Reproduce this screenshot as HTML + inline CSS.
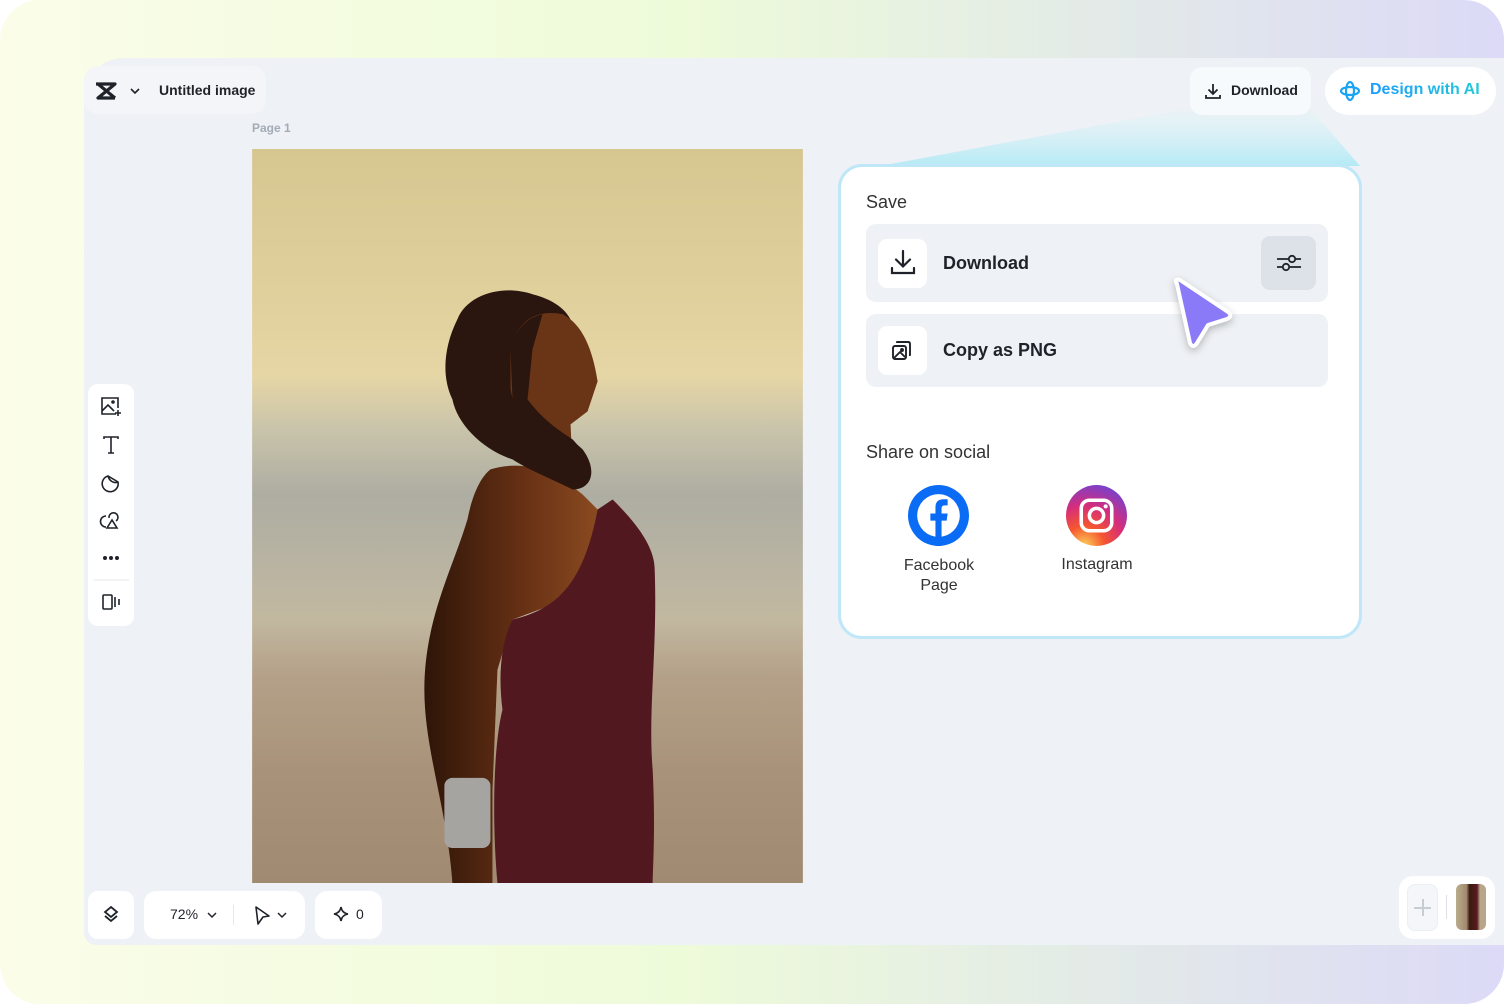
<!DOCTYPE html>
<html><head><meta charset="utf-8"><style>
*{margin:0;padding:0;box-sizing:border-box}
html,body{width:1504px;height:1004px;overflow:hidden;background:#fff;font-family:"Liberation Sans",sans-serif}
.bg{position:absolute;left:0;top:0;width:1504px;height:1004px;border-radius:40px;background:linear-gradient(90deg,#fbfde9 0%,#eefbd9 45%,#e4ece6 70%,#dcdaf7 100%)}
.app{position:absolute;left:84px;top:58px;width:1420px;height:887px;background:#eef1f5;border-radius:40px 0 0 12px}
.abs{position:absolute}
.w{background:#fff}
.t{color:#1f2329}
</style></head><body>
<div class="bg"></div>
<div class="app"></div>

<div class="abs" style="left:84px;top:66px;width:182px;height:48px;background:#f3f5f8;border-radius:14px"></div>
<svg class="abs" style="left:94px;top:82px" width="24" height="18" viewBox="0 0 24 18"><path d="M2 2H21L4 16H21M4 2L21 16" fill="none" stroke="#1f2329" stroke-width="3.2" stroke-linejoin="round"/></svg>
<svg class="abs" style="left:129px;top:86px" width="12" height="10" viewBox="0 0 12 10"><path d="M2 3L6 7L10 3" fill="none" stroke="#1f2329" stroke-width="1.6"/></svg>
<div class="abs t" style="left:159px;top:82px;font-size:14px;font-weight:700">Untitled image</div>
<div class="abs" style="left:252px;top:121px;font-size:12px;color:#a3abb6;font-weight:700">Page 1</div>

<svg class="abs" style="left:0;top:0" width="1504" height="200"><defs><linearGradient id="bm" x1="0" y1="0" x2="0" y2="1"><stop offset="0" stop-color="#e6f5f8" stop-opacity=".4"/><stop offset="1" stop-color="#b4eaf5"/></linearGradient></defs><polygon points="1192,108 1310,108 1360,166 880,166" fill="url(#bm)"/></svg>

<div class="abs" style="left:1190px;top:67px;width:121px;height:48px;background:#f6fafc;border-radius:12px"></div>
<svg class="abs" style="left:1204px;top:82px" width="18" height="18" viewBox="0 0 18 18"><path d="M9 2V12M4.5 7.5L9 12L13.5 7.5M2 13V16H16V13" fill="none" stroke="#1f2329" stroke-width="1.8"/></svg>
<div class="abs t" style="left:1231px;top:82px;font-size:14px;font-weight:700">Download</div>
<div class="abs w" style="left:1325px;top:67px;width:171px;height:48px;border-radius:24px"></div>
<svg class="abs" style="left:1339px;top:80px" width="22" height="22" viewBox="0 0 22 22"><g fill="none" stroke="#1aa4f4" stroke-width="2.2"><ellipse cx="11" cy="11" rx="9" ry="4"/><ellipse cx="11" cy="11" rx="4" ry="9"/></g></svg>
<div class="abs" style="left:1370px;top:81px;font-size:16px;font-weight:700;background:linear-gradient(90deg,#1a9cff,#23c8d8);-webkit-background-clip:text;background-clip:text;color:transparent">Design with AI</div>

<svg class="abs" style="left:252px;top:149px" width="551" height="734" viewBox="0 0 550 733">
<defs>
<linearGradient id="sc" x1="0" y1="0" x2="0" y2="1">
<stop offset="0" stop-color="#d6c690"/><stop offset=".2" stop-color="#e0d09c"/><stop offset=".31" stop-color="#e6d6a6"/>
<stop offset=".38" stop-color="#c9c4aa"/><stop offset=".47" stop-color="#aeada2"/><stop offset=".56" stop-color="#b8b3a2"/><stop offset=".64" stop-color="#c2b8a0"/>
<stop offset=".72" stop-color="#b4a088"/><stop offset=".85" stop-color="#a8927a"/><stop offset="1" stop-color="#a08a72"/></linearGradient>
<linearGradient id="sk" x1="0" y1="0" x2="1" y2="0"><stop offset="0" stop-color="#2e1508"/><stop offset=".6" stop-color="#6a3215"/><stop offset="1" stop-color="#8a4a20"/></linearGradient>
</defs>
<rect width="550" height="733" fill="url(#sc)"/>
<path d="M238,320 C270,310 300,320 330,345 L345,360 L340,440 L260,470 L245,520 L240,640 L240,733 L200,733 C195,660 172,600 172,540 C172,470 200,420 215,370 C220,345 228,328 238,320 Z" fill="url(#sk)"/>
<path d="M205,170 C215,145 250,135 280,145 C300,150 315,160 320,175 L300,180 L282,215 L275,255 C290,275 310,280 330,300 C345,320 340,340 320,340 C300,330 275,320 260,310 C230,300 205,275 200,250 C190,230 190,200 205,170 Z" fill="#2a160e"/>
<path d="M258,200 C265,170 285,160 310,165 C330,175 340,200 345,232 L335,262 L318,275 L320,320 L285,300 C270,285 262,260 258,240 Z" fill="#6a3416"/>
<path d="M258,200 C262,180 275,168 290,165 L280,200 L275,250 C290,270 305,280 320,290 C340,310 338,335 320,335 C300,325 275,315 262,300 Z" fill="#2a160e"/>
<path d="M260,470 C300,460 330,440 345,360 L360,350 C380,370 402,395 402,420 C405,500 395,560 400,620 C403,680 400,720 400,733 L245,733 C240,680 240,600 250,560 C245,520 250,490 260,470 Z" fill="#521820"/>
<rect x="192" y="628" width="46" height="70" rx="8" fill="#a5a4a0"/>
</svg>

<div class="abs w" style="left:88px;top:384px;width:46px;height:242px;border-radius:10px"></div>
<svg class="abs" style="left:88px;top:384px" width="46" height="242" viewBox="0 0 46 242" fill="none" stroke="#1f2329" stroke-width="1.6">
<path d="M28 30H14V14H30V24M14 27L20 21L26 27M27 29H33M30 26V32"/><circle cx="25" cy="18" r="1" fill="#1f2329"/>
<path d="M16 55V53H30V55M23 53V69M20 69H26"/>
<path d="M30 98A8 8 0 1 1 20 92L30 98ZM20 92C21 96 25 100 30 98"/>
<path d="M19 144L24 136L29 144ZM21 134A4.5 4.5 0 1 1 28 137M18 143A4 4 0 0 1 18 132"/>
<circle cx="17" cy="174" r="1.2" fill="#1f2329"/><circle cx="23" cy="174" r="1.2" fill="#1f2329"/><circle cx="29" cy="174" r="1.2" fill="#1f2329"/>
<path d="M5 196H41" stroke="#e5e8ec" stroke-width="1"/>
<rect x="15" y="211" width="9" height="14" rx="1"/><path d="M27 213V223M31 215V221"/>
</svg>

<div class="abs w" style="left:88px;top:891px;width:46px;height:48px;border-radius:10px"></div>
<svg class="abs" style="left:101px;top:904px" width="20" height="22" viewBox="0 0 20 22" fill="none" stroke="#1f2329" stroke-width="1.8"><path d="M10 3L16 8L10 13L4 8Z M4 12L10 17L16 12"/></svg>
<div class="abs w" style="left:144px;top:891px;width:161px;height:48px;border-radius:12px"></div>
<div class="abs t" style="left:170px;top:906px;font-size:14px">72%</div>
<svg class="abs" style="left:206px;top:910px" width="12" height="10"><path d="M2 3L6 7L10 3" fill="none" stroke="#1f2329" stroke-width="1.5"/></svg>
<div class="abs" style="left:233px;top:905px;width:1px;height:20px;background:#e5e8ec"></div>
<svg class="abs" style="left:252px;top:904px" width="20" height="22"><path d="M4 3L17 12L11 13L6 20Z" fill="none" stroke="#1f2329" stroke-width="1.6" stroke-linejoin="round"/></svg>
<svg class="abs" style="left:276px;top:910px" width="12" height="10"><path d="M2 3L6 7L10 3" fill="none" stroke="#1f2329" stroke-width="1.5"/></svg>
<div class="abs w" style="left:315px;top:891px;width:67px;height:48px;border-radius:12px"></div>
<svg class="abs" style="left:333px;top:906px" width="16" height="16"><path d="M8 1Q9 7 15 8Q9 9 8 15Q7 9 1 8Q7 7 8 1Z" fill="none" stroke="#1f2329" stroke-width="1.6"/></svg>
<div class="abs t" style="left:356px;top:906px;font-size:14px">0</div>

<div class="abs w" style="left:1399px;top:876px;width:96px;height:63px;border-radius:14px"></div>
<div class="abs" style="left:1407px;top:884px;width:31px;height:47px;background:#f4f6f9;border-radius:8px;border:1px solid #eceff3"></div>
<div class="abs" style="left:1414px;top:907px;width:17px;height:1.5px;background:#c8cdd4"></div>
<div class="abs" style="left:1422px;top:899px;width:1.5px;height:17px;background:#c8cdd4"></div>
<div class="abs" style="left:1446px;top:895px;width:1px;height:24px;background:#dde1e6"></div>
<div class="abs" style="left:1456px;top:884px;width:30px;height:46px;border-radius:6px;background:linear-gradient(90deg,#b9ad8c 0%,#a38970 35%,#3a1a10 45%,#5a1a20 70%,#b8a68a 80%)"></div>

<div class="abs w" style="left:838px;top:164px;width:524px;height:475px;border:3px solid #bfe7f8;border-radius:24px"></div>
<div class="abs" style="left:866px;top:192px;font-size:18px;color:#333">Save</div>
<div class="abs" style="left:866px;top:224px;width:462px;height:78px;background:#eef1f5;border-radius:10px"></div>
<div class="abs w" style="left:878px;top:239px;width:49px;height:49px;border-radius:9px"></div>
<svg class="abs" style="left:890px;top:249px" width="26" height="28" viewBox="0 0 26 28" fill="none" stroke="#1f2329" stroke-width="2.2" stroke-linecap="round"><path d="M13 2V17M6 10.5L13 17.5L20 10.5M2 19V24H24V19"/></svg>
<div class="abs t" style="left:943px;top:253px;font-size:18px;font-weight:700">Download</div>
<div class="abs" style="left:1261px;top:236px;width:55px;height:54px;background:#dde2e9;border-radius:9px"></div>
<svg class="abs" style="left:1276px;top:251px" width="26" height="24" viewBox="0 0 26 24" fill="none" stroke="#1f2329" stroke-width="1.8"><path d="M1 8H12M20 8H25M1 16H6M14 16H25"/><circle cx="16" cy="8" r="3.2"/><circle cx="10" cy="16" r="3.2"/></svg>
<div class="abs" style="left:866px;top:314px;width:462px;height:73px;background:#eef1f5;border-radius:10px"></div>
<div class="abs w" style="left:878px;top:326px;width:49px;height:49px;border-radius:9px"></div>
<svg class="abs" style="left:890px;top:338px" width="24" height="24" viewBox="0 0 24 24" fill="none" stroke="#1f2329" stroke-width="1.9" stroke-linejoin="round"><rect x="3" y="8" width="13" height="13" rx="2"/><path d="M7 5V4H18Q20 4 20 6V17H19M4 20L10 14L15 19"/><circle cx="12" cy="12" r="1" fill="#1f2329"/></svg>
<div class="abs t" style="left:943px;top:340px;font-size:18px;font-weight:700">Copy as PNG</div>

<div class="abs" style="left:866px;top:442px;font-size:18px;color:#333">Share on social</div>
<svg class="abs" style="left:908px;top:485px" width="61" height="61" viewBox="0 0 60 60"><circle cx="30" cy="30" r="30" fill="#0a6cf5"/><circle cx="30" cy="30" r="21" fill="#fff"/><path d="M27 60V35H22V28H27V22Q27 14 35 14H39V20H36Q33 20 33 23V28H39L38 35H33V60Z" fill="#0a6cf5"/></svg>
<div class="abs" style="left:888px;top:556px;width:102px;text-align:center;font-size:16px;color:#333;line-height:20px">Facebook<br>Page</div>
<svg class="abs" style="left:1066px;top:485px" width="61" height="61" viewBox="0 0 60 60"><defs><radialGradient id="ig" cx=".3" cy="1" r="1.1"><stop offset="0" stop-color="#fdd15a"/><stop offset=".3" stop-color="#f5562e"/><stop offset=".6" stop-color="#d62d7b"/><stop offset="1" stop-color="#6a44d8"/></radialGradient></defs><circle cx="30" cy="30" r="30" fill="url(#ig)"/><rect x="15" y="15" width="30" height="30" rx="8" fill="none" stroke="#fff" stroke-width="3.5"/><circle cx="30" cy="30" r="7" fill="none" stroke="#fff" stroke-width="3.5"/><circle cx="39" cy="21" r="2" fill="#fff"/></svg>
<div class="abs" style="left:1046px;top:556px;width:102px;text-align:center;font-size:16px;color:#333">Instagram</div>

<svg class="abs" style="left:1160px;top:270px" width="90" height="95"><defs><filter id="sh" x="-30%" y="-30%" width="160%" height="160%"><feDropShadow dx="0" dy="3" stdDeviation="4" flood-opacity=".25"/></filter></defs><path d="M17 14Q14 8 20 10L68 42Q73 46 67 49L48 55L37 73Q33 79 30 73Z" fill="#8a7af7" stroke="#fff" stroke-width="4" stroke-linejoin="round" filter="url(#sh)"/></svg>
</body></html>
